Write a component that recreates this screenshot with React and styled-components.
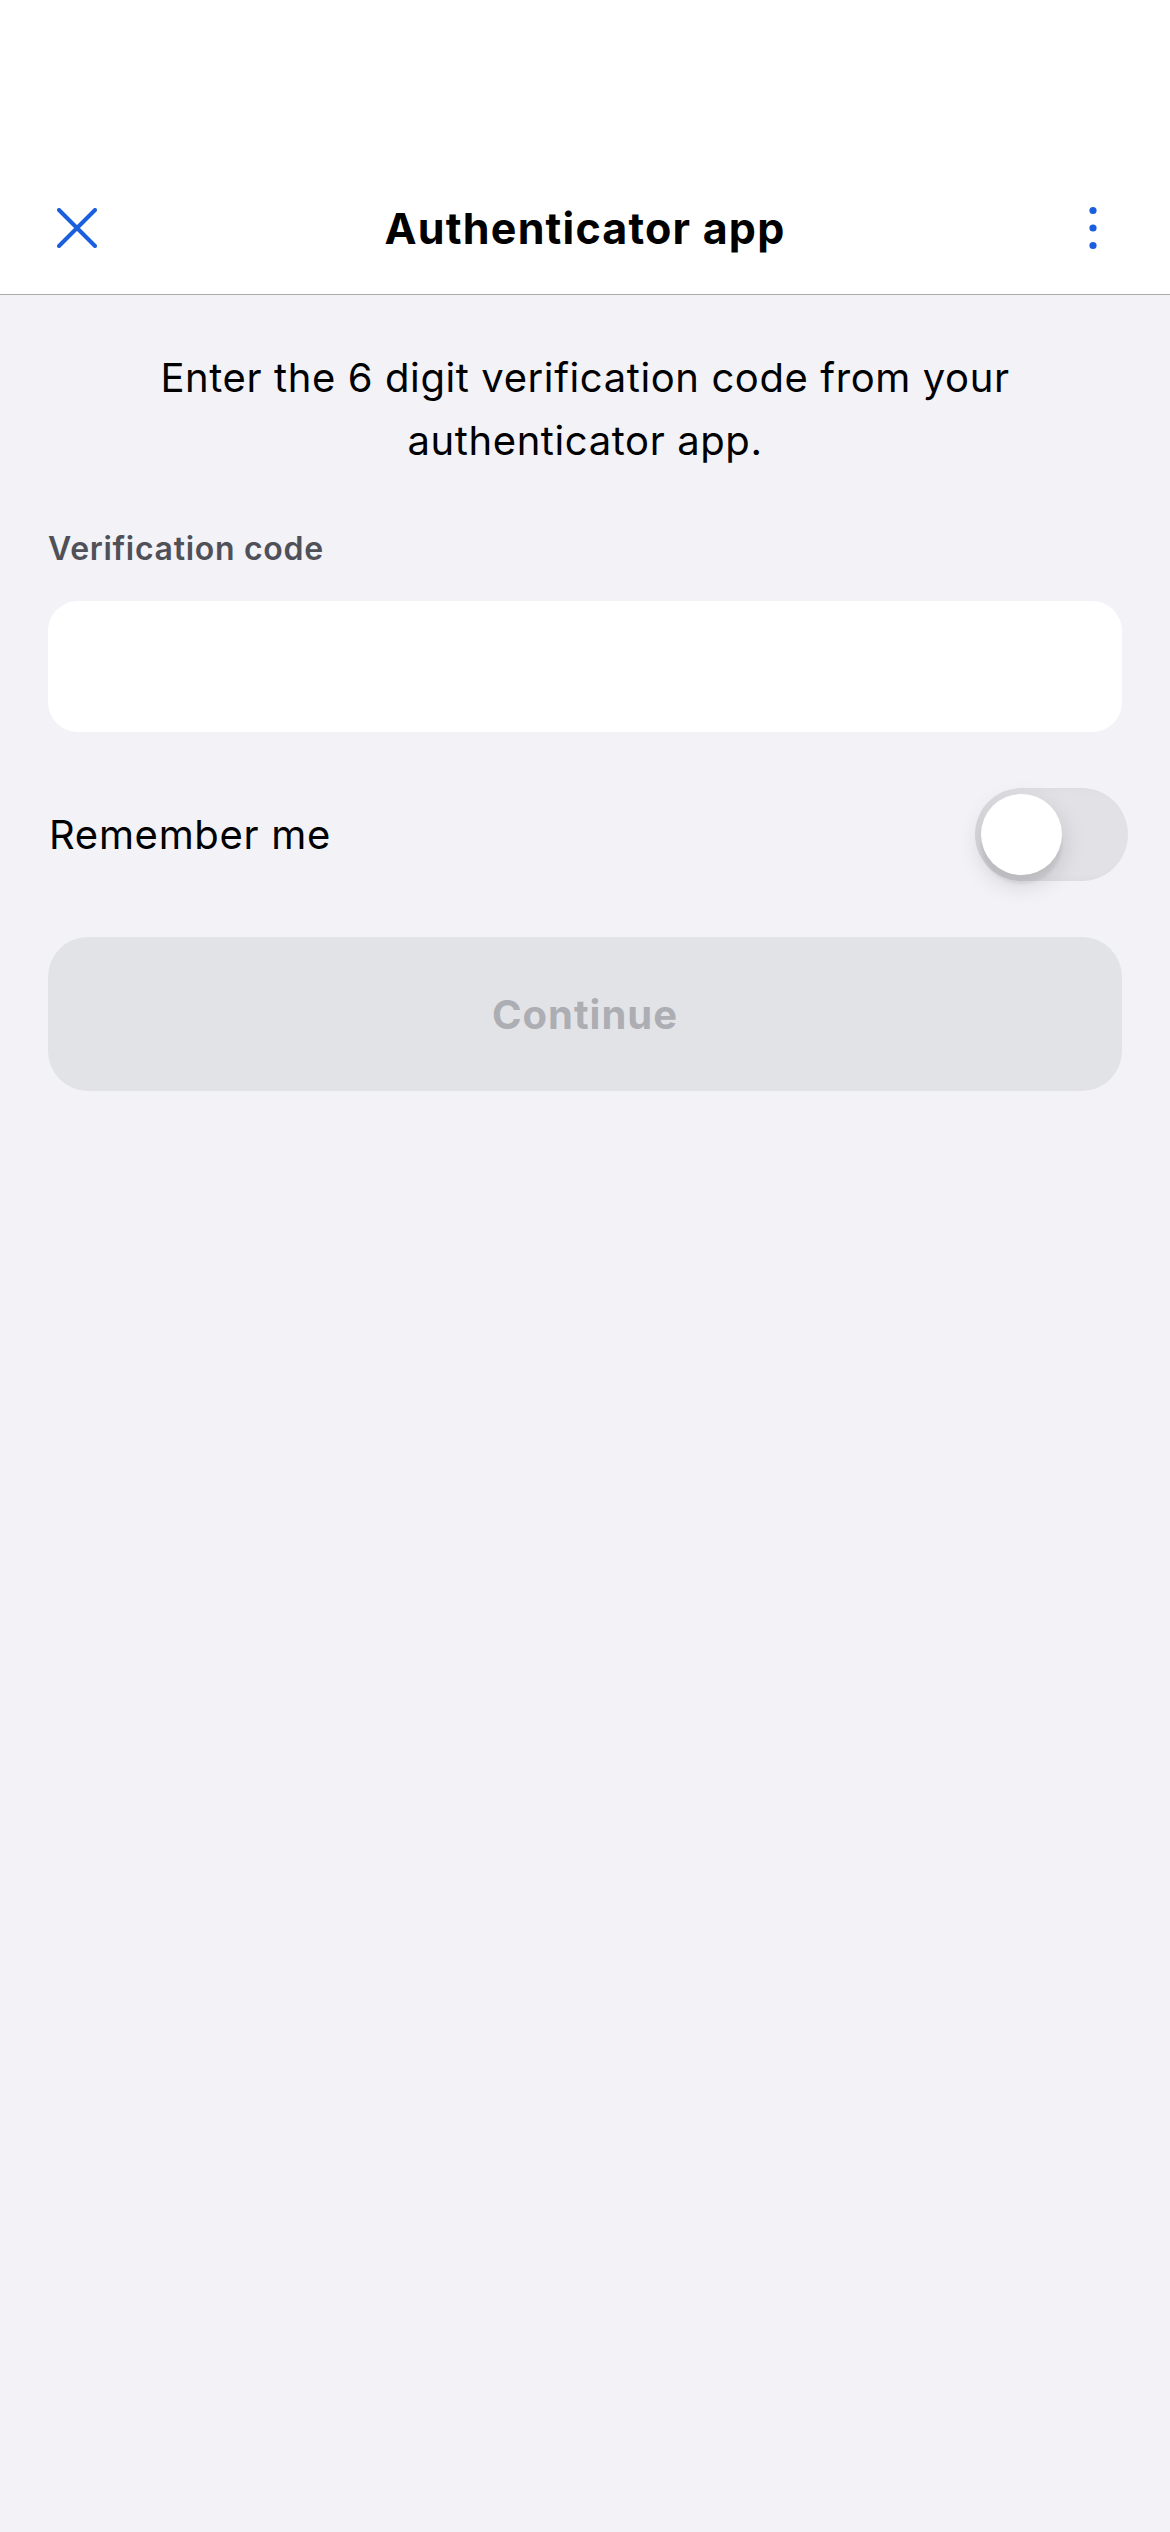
import React from "react";
import styled, { createGlobalStyle } from "styled-components";

const Global = createGlobalStyle`
  html, body {
    margin: 0;
    padding: 0;
    background: #f2f2f7;
    font-family: Inter, "Noto Sans", "Liberation Sans", sans-serif;
    -webkit-font-smoothing: antialiased;
  }
  * { box-sizing: border-box; }
`;

const Screen = styled.div`
  min-height: 2532px;
  background: #f2f2f7;
  display: flex;
  flex-direction: column;
`;

const Header = styled.header`
  background: #ffffff;
  padding-top: 162px;
  border-bottom: 1px solid #ababab;
`;

const NavBar = styled.div`
  height: 132px;
  padding: 0 57px;
  display: grid;
  grid-template-columns: 40px 1fr 40px;
  align-items: center;
`;

const IconButton = styled.button`
  width: 40px;
  height: 40px;
  padding: 0;
  border: none;
  background: transparent;
  display: flex;
  align-items: center;
  justify-content: center;
  color: #1a5fde;
`;

const Title = styled.h1`
  margin: 0;
  text-align: center;
  font-size: 43px;
  font-weight: 700;
  color: #000;
  letter-spacing: 1.2px;
`;

const Content = styled.main`
  padding: 51px 48px 0;
  display: flex;
  flex-direction: column;
`;

const Intro = styled.p`
  margin: 0;
  text-align: center;
  font-size: 40px;
  line-height: 63px;
  letter-spacing: 0.6px;
  color: #000;
  padding: 0 80px;
`;

const FieldLabel = styled.label`
  margin-top: 57px;
  font-size: 32px;
  line-height: 40px;
  font-weight: 600;
  letter-spacing: 0.7px;
  color: #505058;
`;

const CodeInput = styled.input`
  margin-top: 32px;
  height: 131px;
  width: 100%;
  border: none;
  border-radius: 30px;
  background: #ffffff;
  padding: 0 36px;
  font-size: 40px;
  font-family: inherit;
  outline: none;
`;

const ToggleRow = styled.div`
  margin-top: 56px;
  height: 93px;
  display: flex;
  align-items: center;
  justify-content: space-between;
`;

const ToggleLabel = styled.span`
  font-size: 40px;
  letter-spacing: 0.7px;
  color: #000;
  padding-left: 1px;
`;

const Switch = styled.div`
  position: relative;
  width: 153px;
  height: 93px;
  margin-right: -6px;
  border-radius: 47px;
  background: #e1e1e6;
  box-shadow: inset 6px 0 10px rgba(0, 0, 0, 0.04);
`;

const Knob = styled.span`
  position: absolute;
  top: 6px;
  left: ${(p) => (p.$on ? "66px" : "6px")};
  width: 81px;
  height: 81px;
  border-radius: 50%;
  background: #ffffff;
  box-shadow: 0 9px 24px rgba(0, 0, 0, 0.15), 0 9px 3px rgba(0, 0, 0, 0.06);
`;

const PrimaryButton = styled.button`
  margin-top: 56px;
  height: 154px;
  width: 100%;
  border: none;
  border-radius: 40px;
  background: #e2e3e7;
  color: #adaeb3;
  font-family: inherit;
  font-size: 40px;
  font-weight: 700;
  letter-spacing: 1px;
`;

const CloseIcon = () => (
  <svg width="40" height="40" viewBox="0 0 40 40" fill="none">
    <path
      d="M2 2 L38 38 M38 2 L2 38"
      stroke="currentColor"
      strokeWidth="4"
      strokeLinecap="round"
    />
  </svg>
);

const MoreIcon = () => (
  <svg width="40" height="48" viewBox="0 0 40 48" fill="currentColor">
    <circle cx="20" cy="6.5" r="3.6" />
    <circle cx="20" cy="24" r="3.6" />
    <circle cx="20" cy="41.5" r="3.6" />
  </svg>
);

export default function App() {
  return (
    <Screen>
      <Global />
      <Header>
        <NavBar>
          <IconButton aria-label="Close">
            <CloseIcon />
          </IconButton>
          <Title>Authenticator app</Title>
          <IconButton aria-label="More">
            <MoreIcon />
          </IconButton>
        </NavBar>
      </Header>
      <Content>
        <Intro>Enter the 6 digit verification code from your authenticator app.</Intro>
        <FieldLabel htmlFor="code">Verification code</FieldLabel>
        <CodeInput id="code" />
        <ToggleRow>
          <ToggleLabel>Remember me</ToggleLabel>
          <Switch>
            <Knob $on={false} />
          </Switch>
        </ToggleRow>
        <PrimaryButton disabled>Continue</PrimaryButton>
      </Content>
    </Screen>
  );
}
